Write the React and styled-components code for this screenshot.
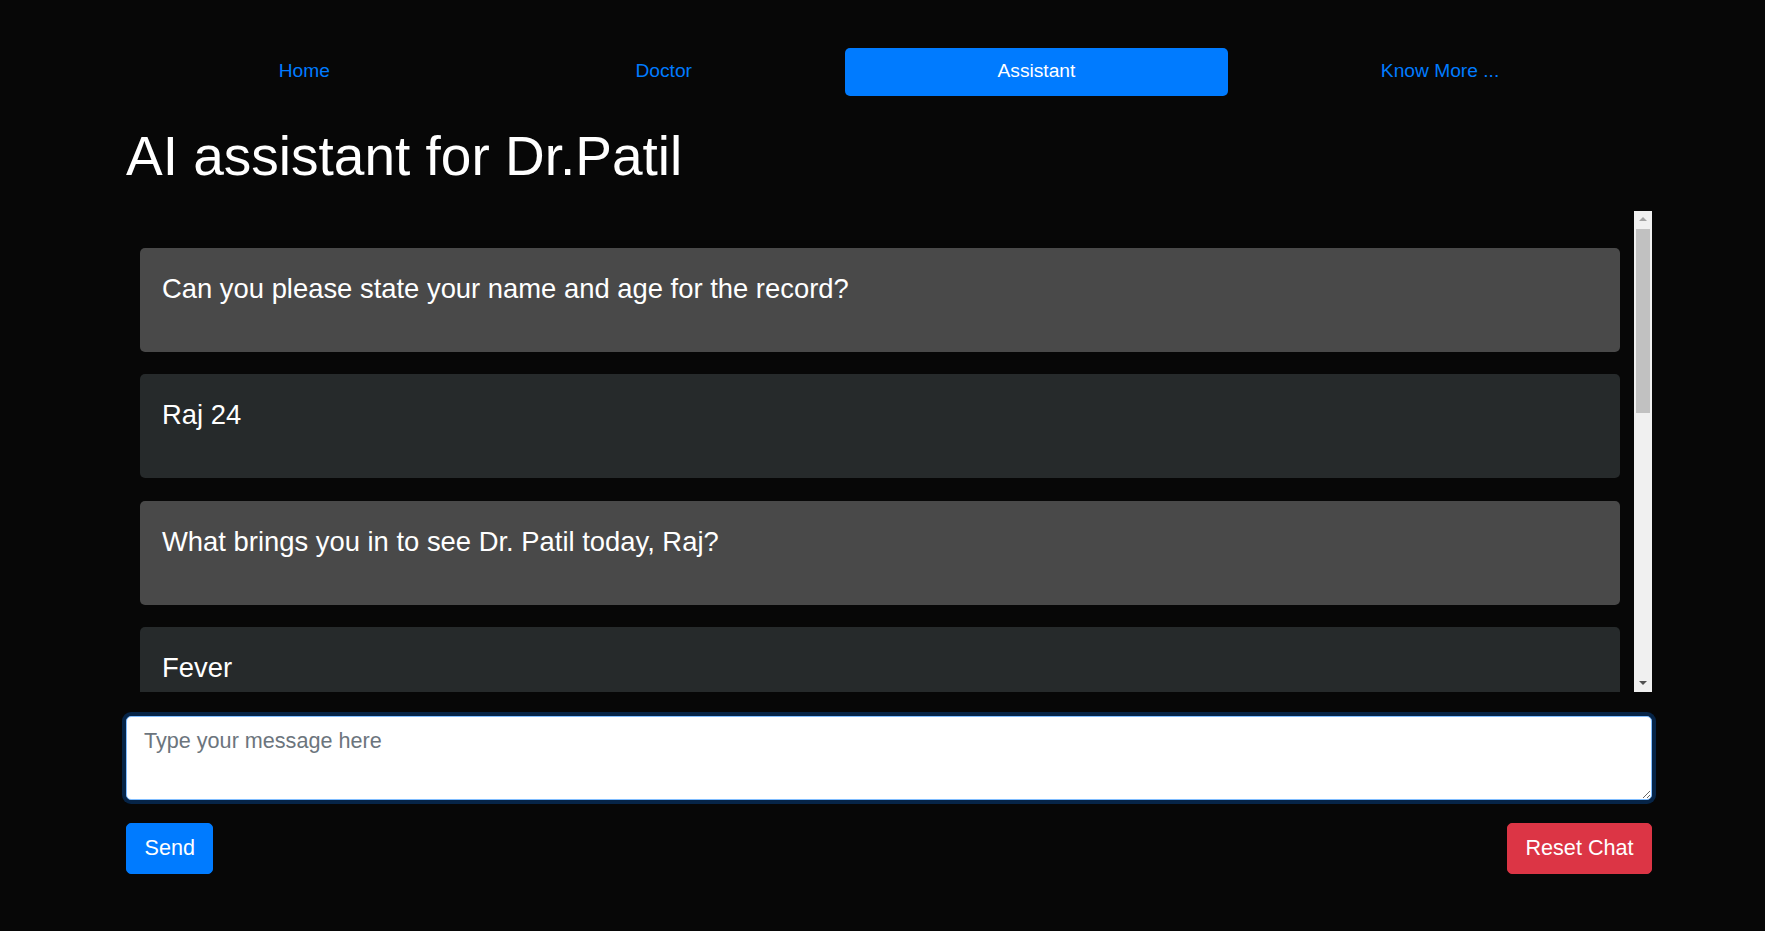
import React from 'react'
import styled, { createGlobalStyle } from 'styled-components'

const GlobalStyle = createGlobalStyle`
  html, body {
    margin: 0;
    padding: 0;
    background: #070707;
    font-family: "Liberation Sans", Arial, sans-serif;
  }
  * { box-sizing: border-box; }
`

const Page = styled.div`
  padding: 48px 0 40px 126px;
  min-height: 931px;
`

const Wrapper = styled.div`
  width: 1526px;
`

const Nav = styled.ul`
  display: flex;
  list-style: none;
  margin: 0;
  padding: 0;
`

const NavItem = styled.li`
  flex: 1 1 auto;
  text-align: center;
`

const NavLink = styled.a`
  display: block;
  padding: 8.8px 19.2px 10.4px;
  font-size: 19.2px;
  line-height: 28.8px;
  border-radius: 5px;
  text-decoration: none;
  color: ${props => (props.$active ? '#fff' : '#007bff')};
  background: ${props => (props.$active ? '#007bff' : 'transparent')};
`

const Title = styled.h1`
  margin: 27px 0 22px;
  font-size: 55px;
  line-height: 66px;
  font-weight: 400;
  color: #fff;
`

const ChatArea = styled.div`
  display: flex;
  height: 481px;
`

const ChatList = styled.div`
  flex: 1;
  overflow: hidden;
  display: flex;
  flex-direction: column;
  gap: 22.5px;
  padding: 37px 14px 14px;
`

const Scrollbar = styled.div`
  flex: none;
  width: 18px;
  display: flex;
  flex-direction: column;
  background: #f0f0f0;
`

const ScrollArrow = styled.div`
  height: 17px;
  display: flex;
  align-items: center;
  justify-content: center;
`

const ScrollTrack = styled.div`
  flex: 1;
  padding: 1px 2px;
`

const ScrollThumb = styled.div`
  height: 184px;
  background: #c1c1c1;
`

const Message = styled.div`
  flex: none;
  padding: 20px 22px 23px;
  border-radius: 5px;
  background: ${props => (props.$bot ? '#494949' : '#262a2b')};
  color: #fff;
  font-size: 27.4px;
  line-height: 41px;

  p {
    margin: 0 0 20px;
  }
`

const Input = styled.textarea`
  display: block;
  width: 100%;
  height: 84px;
  margin-top: 24px;
  padding: 8px 17px;
  font-family: "Liberation Sans", Arial, sans-serif;
  font-size: 21.6px;
  line-height: 32.4px;
  color: #495057;
  background: #fff;
  border: 1px solid #80bdff;
  border-radius: 5px;
  outline: none;
  box-shadow: 0 0 0 4px #062447;

  &::placeholder {
    color: #6c757d;
  }
`

const Actions = styled.div`
  display: flex;
  justify-content: space-between;
  margin-top: 23px;
`

const Button = styled.button`
  padding: 8.3px 17.5px;
  font-family: "Liberation Sans", Arial, sans-serif;
  font-size: 21.6px;
  line-height: 32.4px;
  color: #fff;
  border: 1px solid ${props => (props.$danger ? '#dc3545' : '#007bff')};
  background: ${props => (props.$danger ? '#dc3545' : '#007bff')};
  border-radius: 5px;
  cursor: pointer;
`

const Arrow = ({ up, color }) => (
  <svg width="8" height="4" viewBox="0 0 8 4">
    <path d={up ? 'M0 4 L4 0 L8 4 Z' : 'M0 0 L8 0 L4 4 Z'} fill={color} />
  </svg>
)

const links = ['Home', 'Doctor', 'Assistant', 'Know More ...']

const messages = [
  { bot: true, text: 'Can you please state your name and age for the record?' },
  { bot: false, text: 'Raj 24' },
  { bot: true, text: 'What brings you in to see Dr. Patil today, Raj?' },
  { bot: false, text: 'Fever' },
]

export default function App() {
  return (
    <Page>
      <GlobalStyle />
      <Wrapper>
        <Nav>
          {links.map(l => (
            <NavItem key={l}>
              <NavLink href="#" $active={l === 'Assistant'}>{l}</NavLink>
            </NavItem>
          ))}
        </Nav>
        <Title>AI assistant for Dr.Patil</Title>
        <ChatArea>
          <ChatList>
            {messages.map((m, i) => (
              <Message key={i} $bot={m.bot}>
                <p>{m.text}</p>
              </Message>
            ))}
          </ChatList>
          <Scrollbar>
            <ScrollArrow><Arrow up color="#a3a3a3" /></ScrollArrow>
            <ScrollTrack><ScrollThumb /></ScrollTrack>
            <ScrollArrow><Arrow color="#505050" /></ScrollArrow>
          </Scrollbar>
        </ChatArea>
        <Input placeholder="Type your message here" />
        <Actions>
          <Button>Send</Button>
          <Button $danger>Reset Chat</Button>
        </Actions>
      </Wrapper>
    </Page>
  )
}
